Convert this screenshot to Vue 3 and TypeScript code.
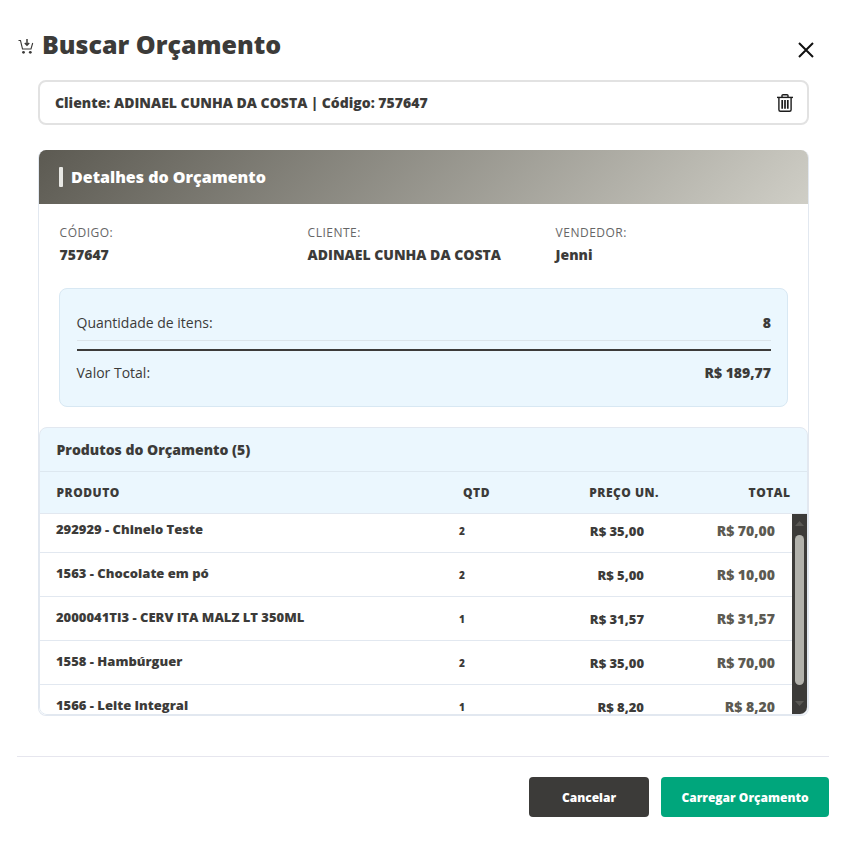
<script setup lang="ts">
import { onMounted, ref } from 'vue'

interface Item { name: string; qty: number; price: string; total: string }

const items: Item[] = [
  { name: '292929 - Chinelo Teste', qty: 2, price: 'R$ 35,00', total: 'R$ 70,00' },
  { name: '1563 - Chocolate em pó', qty: 2, price: 'R$ 5,00', total: 'R$ 10,00' },
  { name: '2000041TI3 - CERV ITA MALZ LT 350ML', qty: 1, price: 'R$ 31,57', total: 'R$ 31,57' },
  { name: '1558 - Hambúrguer', qty: 2, price: 'R$ 35,00', total: 'R$ 70,00' },
  { name: '1566 - Leite Integral', qty: 1, price: 'R$ 8,20', total: 'R$ 8,20' },
]

const scroller = ref<HTMLElement | null>(null)
onMounted(() => {
  if (scroller.value) scroller.value.scrollTop = 5
})
</script>

<template>
  <div class="modal">
    <header class="head">
      <svg class="cart" width="16" height="17" viewBox="0 0 16 17" fill="none" stroke="#3c3b39" stroke-width="1.1">
        <path d="M0.5 2.5h2l2 8.5h8.5l1.7-6" />
        <path d="M9 1v6M6.8 5L9 7.2 11.2 5" stroke-width="1.5" />
        <circle cx="5.5" cy="14.3" r="1.4" fill="#3c3b39" stroke="none" />
        <circle cx="12.3" cy="14.3" r="1.4" fill="#3c3b39" stroke="none" />
      </svg>
      <h1 class="title">Buscar Orçamento</h1>
      <svg class="close" width="16" height="16" viewBox="0 0 16 16" stroke="#111" stroke-width="2" fill="none">
        <path d="M1 1l14 14M15 1L1 15" />
      </svg>
    </header>

    <div class="body">
      <div class="search">
        <span>Cliente: ADINAEL CUNHA DA COSTA | Código: 757647</span>
        <svg width="16" height="18" viewBox="0 0 16 18" fill="none" stroke="#1c1c1c" stroke-width="1.4">
          <path d="M0 3.4h16" />
          <path d="M5 3.2V1.6C5 1 5.4.7 6 .7h4c.6 0 1 .3 1 .9v1.6" />
          <path d="M1.9 3.5v12.3c0 .9.6 1.5 1.5 1.5h9.2c.9 0 1.5-.6 1.5-1.5V3.5" />
          <path d="M5.2 6v8.8M8 6v8.8M10.8 6v8.8" stroke-width="1.7" />
        </svg>
      </div>

      <section class="card">
        <div class="banner"><span class="mark"></span><h2>Detalhes do Orçamento</h2></div>

        <div class="info">
          <div><div class="lbl">CÓDIGO:</div><div class="val">757647</div></div>
          <div><div class="lbl">CLIENTE:</div><div class="val">ADINAEL CUNHA DA COSTA</div></div>
          <div><div class="lbl">VENDEDOR:</div><div class="val">Jenni</div></div>
        </div>

        <div class="summary">
          <div class="sum-row first"><span>Quantidade de itens:</span><b>8</b></div>
          <div class="sum-row second"><span>Valor Total:</span><b>R$ 189,77</b></div>
        </div>

        <div class="products">
          <div class="prod-title">Produtos do Orçamento (5)</div>
          <div class="thead">
            <span>PRODUTO</span><span>QTD</span><span class="r">PREÇO UN.</span><span class="r">TOTAL</span>
          </div>
          <div class="tbody-wrap">
            <div ref="scroller" class="tbody">
              <div v-for="item in items" :key="item.name" class="row">
                <span class="name">{{ item.name }}</span>
                <span class="qty">{{ item.qty }}</span>
                <span class="price">{{ item.price }}</span>
                <span class="total">{{ item.total }}</span>
              </div>
            </div>
            <div class="bar">
              <svg class="arrow" width="9" height="5" viewBox="0 0 9 5"><path d="M4.5 0L9 5H0z" fill="#5a5955" /></svg>
              <div class="thumb"></div>
              <svg class="arrow" width="9" height="5" viewBox="0 0 9 5"><path d="M0 0h9L4.5 5z" fill="#5a5955" /></svg>
            </div>
          </div>
        </div>
      </section>
    </div>

    <footer class="foot">
      <button class="btn dark">Cancelar</button>
      <button class="btn green">Carregar Orçamento</button>
    </footer>
  </div>
</template>

<style scoped>
.modal {
  width: 854px;
  height: 842px;
  box-sizing: border-box;
  padding: 27px 25px 0 17px;
  font-family: "Open Sans", "Liberation Sans", sans-serif;
  color: #3c3b39;
  background: #fff;
}
.head {
  display: flex;
  align-items: center;
  height: 36px;
}
.cart { margin: 2px 8px 0 1px; }
.title {
  flex: 1;
  margin: -2px 0 0;
  font-size: 25px;
  line-height: 36px;
  font-weight: 800;
}
.close { margin: 9px 15px 0 0; }
.body { padding: 17px 20px 0 21px; }
.search {
  display: flex;
  align-items: center;
  justify-content: space-between;
  box-sizing: border-box;
  height: 45px;
  padding: 0 14px 0 15px;
  border: 2px solid #e2e2e2;
  border-radius: 8px;
  font-size: 14px;
  font-weight: 800;
}
.card {
  margin-top: 25px;
  box-sizing: border-box;
  height: 566px;
  border: 1px solid #e2e8f0;
  border-top: 0;
  border-radius: 8px;
  overflow: hidden;
}
.banner {
  display: flex;
  align-items: center;
  height: 54px;
  padding-left: 20px;
  background: linear-gradient(135deg, #5c5a52 0%, #cfcec6 100%);
  color: #fff;
}
.mark {
  width: 4px;
  height: 20px;
  border-radius: 1px;
  background: #e8e8e4;
  margin-right: 8px;
}
.banner h2 { margin: 0; font-size: 16px; font-weight: 800; }
.info {
  display: grid;
  grid-template-columns: repeat(3, 248px);
  padding: 20px 20px 0 20.6px;
}
.lbl { font-size: 12px; line-height: 18px; color: #666; letter-spacing: 0.5px; }
.val { font-size: 14px; line-height: 19px; margin-top: 3px; font-weight: 800; }
.summary {
  margin: 24px 20px 0;
  box-sizing: border-box;
  height: 119px;
  padding: 16px 16px 0 16.5px;
  background: #ebf7fe;
  border: 1px solid #d8e8f3;
  border-radius: 8px;
  font-size: 14px;
}
.summary b { font-weight: 800; }
.sum-row { display: flex; justify-content: space-between; align-items: center; }
.sum-row.first { height: 35px; border-bottom: 1px solid #dbe4ea; }
.sum-row.second { height: 42px; margin-top: 8px; border-top: 2px solid #3c3b39; padding-bottom: 1px; }
.products {
  box-sizing: border-box;
  margin-top: 20px;
  height: 288px;
  background: #ebf7fe;
  border: 1px solid #e2e8f0;
  border-radius: 8px;
  overflow: hidden;
}
.prod-title {
  box-sizing: border-box;
  height: 44px;
  padding-left: 16.5px;
  line-height: 43px;
  font-size: 14px;
  font-weight: 800;
  border-bottom: 1px solid #dde8f0;
}
.thead {
  display: grid;
  grid-template-columns: 406.5px 60px 136px 131.5px;
  box-sizing: border-box;
  height: 42px;
  align-items: center;
  padding: 0 16.5px;
  font-size: 12px;
  font-weight: 800;
  letter-spacing: 0.5px;
  border-bottom: 1px solid #e2e8f0;
}
.r { text-align: right; }
.tbody-wrap { display: flex; height: 200px; background: #fff; }
.tbody {
  flex: 1;
  overflow: hidden;
}
.row {
  display: grid;
  grid-template-columns: 403px 50px 135px 131px;
  box-sizing: border-box;
  height: 44px;
  padding: 0 17px 0 16px;
  border-bottom: 1px solid #e2e8f0;
  font-weight: 800;
}
.name { font-size: 13px; line-height: 40px; }
.qty { font-size: 10px; line-height: 44px; }
.price { font-size: 13px; line-height: 44px; text-align: right; }
.total { font-size: 14px; line-height: 43px; text-align: right; color: #5c5a52; }
.bar {
  box-sizing: border-box;
  width: 15px;
  display: flex;
  flex-direction: column;
  align-items: center;
  background: #3c3b39;
  padding-top: 7px;
}
.arrow { flex: none; }
.thumb {
  width: 9px;
  height: 150px;
  margin: 9px 0 16px;
  border-radius: 5px;
  background: #b2b2ac;
}
.foot {
  margin: 40px 0 0 0;
  padding-top: 20px;
  border-top: 1px solid #e6e6ee;
  display: flex;
  justify-content: flex-end;
  gap: 12px;
}
.btn {
  height: 40px;
  border: 0;
  border-radius: 4px;
  color: #fff;
  font-family: inherit;
  font-size: 12px;
  font-weight: 800;
}
.dark { width: 120px; background: #3c3b39; }
.green { width: 168px; background: #00a67c; }
</style>
